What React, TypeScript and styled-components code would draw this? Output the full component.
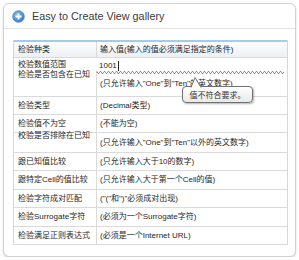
import * as React from 'react';
import styled, { createGlobalStyle } from 'styled-components';

const GlobalStyle = createGlobalStyle`
  html, body {
    margin: 0;
    padding: 0;
    background: #ffffff;
  }
  body {
    font-family: "Liberation Sans", "Noto Sans CJK SC", sans-serif;
  }
`;

const Card = styled.div`
  box-sizing: border-box;
  margin: 3px 0 0 3px;
  width: 293px;
  height: 254px;
  border: 1px solid #d2d2d2;
  border-radius: 6px;
  background: #ffffff;
  box-shadow: 0 1px 2px rgba(0, 0, 0, 0.18);
  overflow: hidden;
`;

const Header = styled.div`
  box-sizing: border-box;
  height: 25px;
  display: flex;
  align-items: center;
  gap: 7px;
  padding-left: 8px;
  border-bottom: 1px solid #e4e4e4;
`;

const Title = styled.span`
  font-family: "Liberation Sans", sans-serif;
  font-size: 10.8px;
  color: #3c3c3c;
`;

const Body = styled.div`
  padding: 11px 0 0 9px;
`;

const Table = styled.div`
  position: relative;
  box-sizing: border-box;
  width: 275px;
  border-left: 1px solid #d6d6d6;
  border-right: 1px solid #d6d6d6;
  font-family: "Liberation Sans", "Noto Sans CJK SC", sans-serif;
  font-size: 8px;
  color: #262626;
`;

const Row = styled.div<{ $h: number; $head?: boolean; $open?: boolean }>`
  box-sizing: border-box;
  display: grid;
  grid-template-columns: 82px 1fr;
  height: ${(p) => p.$h}px;
  border-bottom: ${(p) => (p.$open ? 'none' : '1px solid #dadada')};
  border-top: ${(p) => (p.$head ? '2px solid #a9cbe2' : 'none')};
  background: ${(p) => (p.$head ? 'linear-gradient(#fbfcfd, #eef1f4)' : '#ffffff')};
`;

const Cell = styled.div<{ $top?: boolean; $value?: boolean }>`
  display: flex;
  align-items: ${(p) => (p.$top ? 'flex-start' : 'center')};
  padding-left: ${(p) => (p.$value ? '3px' : '4px')};
  line-height: 10px;
  white-space: nowrap;
  overflow: ${(p) => (p.$top ? 'visible' : 'hidden')};
  border-left: ${(p) => (p.$value ? '1px solid #dadada' : 'none')};
`;

const LabelText = styled.span<{ $top?: boolean }>`
  margin-top: ${(p) => (p.$top ? '-2px' : '0')};
`;

const Editor = styled.div`
  position: absolute;
  left: 82px;
  top: 18px;
  width: 188px;
  height: 16px;
  box-sizing: border-box;
  background: #ffffff;
  display: flex;
  align-items: center;
  padding-left: 3px;
  line-height: 10px;
`;

const Caret = styled.span`
  display: inline-block;
  width: 1px;
  height: 10px;
  margin-left: 1px;
  background: #222222;
`;

const Squiggle = styled.svg`
  position: absolute;
  left: 0;
  bottom: 0;
`;

const Bubble = styled.div`
  position: absolute;
  left: 168px;
  top: 46px;
  width: 71px;
  height: 17px;
  box-sizing: border-box;
  border: 1px solid #707070;
  border-radius: 4px;
  background: linear-gradient(#ffffff, #e9e9e9);
  box-shadow: 1px 1px 2px rgba(0, 0, 0, 0.3);
  display: flex;
  align-items: center;
  justify-content: center;
  font-size: 8px;
  color: #333333;
`;

const Pointer = styled.svg`
  position: absolute;
  left: 7px;
  top: -10px;
`;

const PlusIcon = () => (
  <svg width="13" height="13" viewBox="0 0 13 13">
    <defs>
      <radialGradient id="pg" cx="0.4" cy="0.35" r="0.7">
        <stop offset="0" stopColor="#8cc3f0" />
        <stop offset="1" stopColor="#2f74c4" />
      </radialGradient>
    </defs>
    <circle cx="6.5" cy="6.5" r="5.8" fill="url(#pg)" stroke="#4a86c8" strokeWidth="0.8" />
    <path d="M6.5 3.4v6.2M3.4 6.5h6.2" stroke="#ffffff" strokeWidth="1.8" />
  </svg>
);

const wave = (() => {
  let d = 'M0 2';
  for (let x = 0; x < 188; x += 2) {
    d += ` L${x + 1} ${x % 4 === 0 ? 0.5 : 2.5} L${x + 2} ${x % 4 === 0 ? 2.5 : 0.5}`;
  }
  return d;
})();

const rows: { label: string; value: string; h: number; top?: boolean; open?: boolean }[] = [
  { label: '校验数值范围', value: '', h: 14, open: true },
  { label: '检验是否包含在已知', value: '(只允许输入"One"到"Ten"的英文数字)', h: 25, top: true },
  { label: '检验类型', value: '(Decimal类型)', h: 18 },
  { label: '检验值不为空', value: '(不能为空)', h: 18 },
  { label: '校验是否排除在已知', value: '(只允许输入"One"到"Ten"以外的英文数字)', h: 20, top: true },
  { label: '跟已知值比较', value: '(只允许输入大于10的数字)', h: 18 },
  { label: '跟特定Cell的值比较', value: '(只允许输入大于第一个Cell的值)', h: 19 },
  { label: '检验字符成对匹配', value: '("("和")"必须成对出现)', h: 18 },
  { label: '检验Surrogate字符', value: '(必须为一个Surrogate字符)', h: 19 },
  { label: '检验满足正则表达式', value: '(必须是一个Internet URL)', h: 18 },
];

export default function App() {
  return (
    <>
      <GlobalStyle />
      <Card>
        <Header>
          <PlusIcon />
          <Title>Easy to Create View gallery</Title>
        </Header>
        <Body>
          <Table>
            <Row $h={18} $head>
              <Cell>检验种类</Cell>
              <Cell $value>输入值(输入的值必须满足指定的条件)</Cell>
            </Row>
            {rows.map((r) => (
              <Row key={r.label} $h={r.h} $open={r.open}>
                <Cell $top={r.top}>
                  <LabelText $top={r.top}>{r.label}</LabelText>
                </Cell>
                <Cell $value>{r.value}</Cell>
              </Row>
            ))}
            <Editor>
              1001
              <Caret />
              <Squiggle width="188" height="3">
                <path d={wave} fill="none" stroke="#e05050" strokeWidth="0.8" />
              </Squiggle>
            </Editor>
            <Bubble>
              <Pointer width="14" height="11">
                <path d="M1 10.5 L5 0.5 L11 10.5" fill="#ffffff" stroke="#707070" strokeWidth="1" />
              </Pointer>
              值不符合要求。
            </Bubble>
          </Table>
        </Body>
      </Card>
    </>
  );
}
